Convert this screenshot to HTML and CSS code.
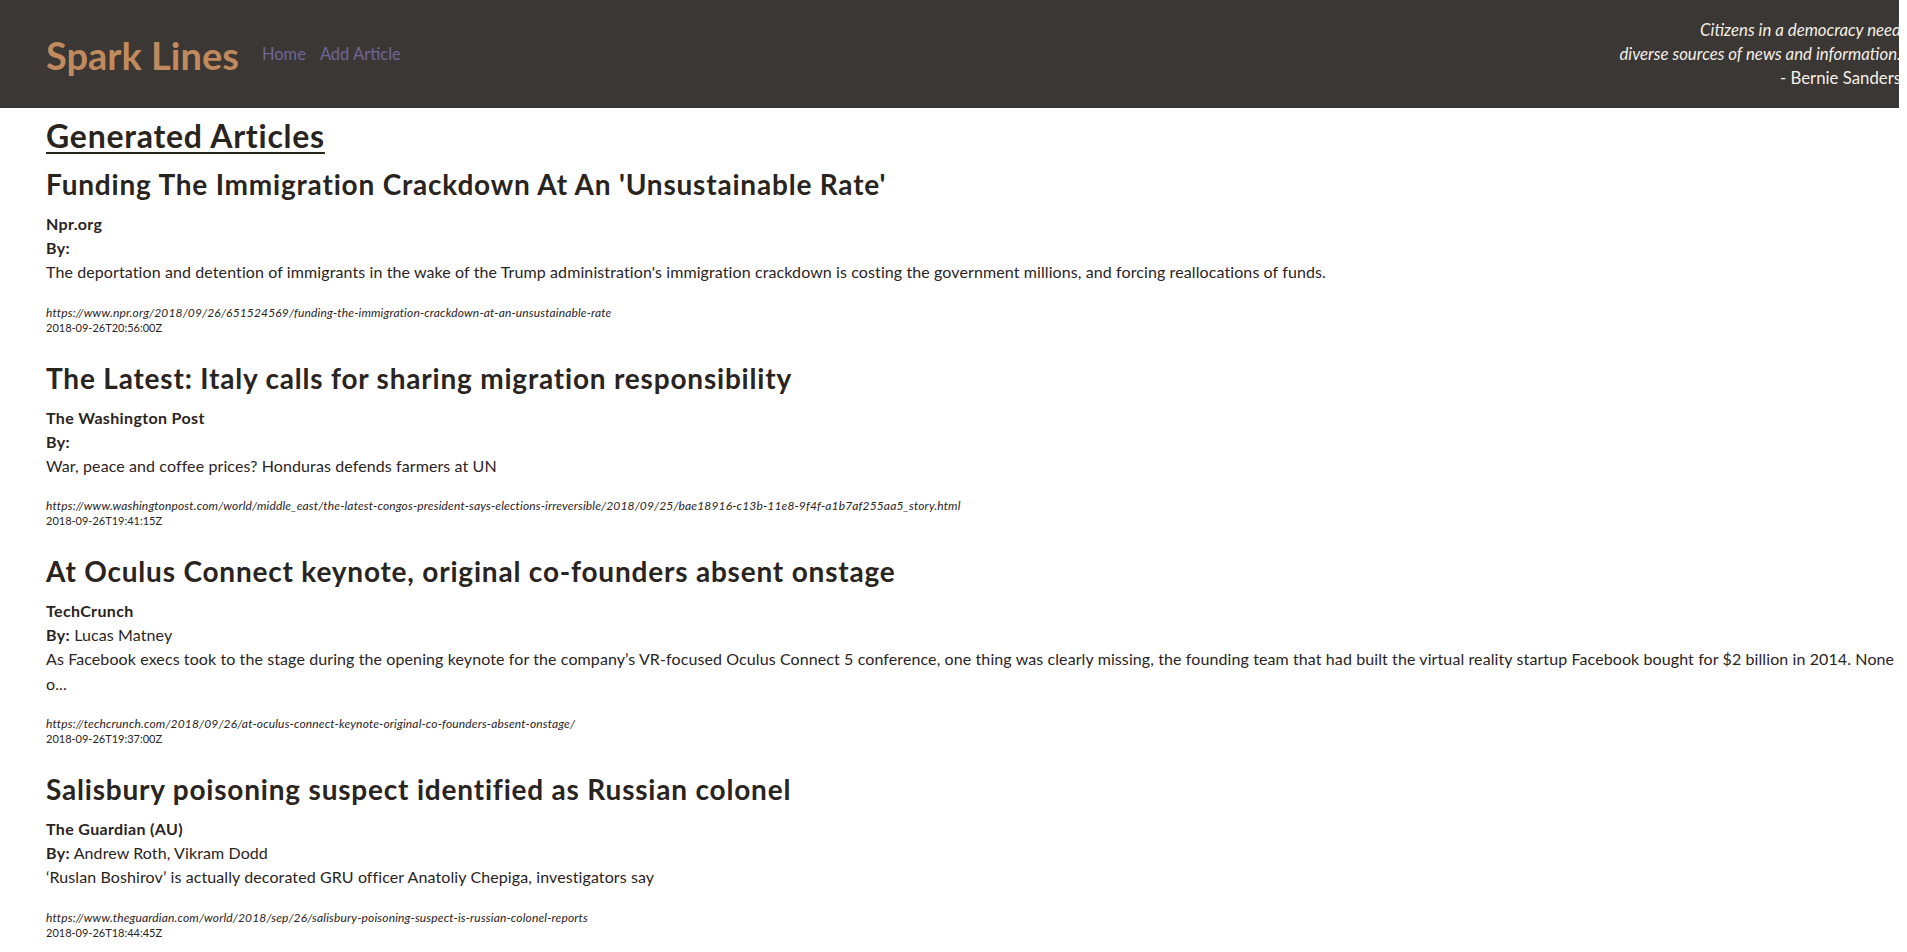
FILE: index.html
```html
<!DOCTYPE html>
<html lang="en">
<head>
<meta charset="utf-8">
<title>Spark Lines</title>
<link rel="stylesheet" href="styles.css">
</head>
<body>
<header class="topbar">
  <div class="brand-nav">
    <span class="brand">Spark Lines</span>
    <nav class="nav">
      <a href="#" class="nav-link">Home</a>
      <a href="#" class="nav-link">Add Article</a>
    </nav>
  </div>
  <div class="quote">
    <em>Citizens in a democracy need</em>
    <em>diverse sources of news and information.</em>
    <span>- Bernie Sanders</span>
  </div>
</header>
<main class="content">
  <h1 class="page-title">Generated Articles</h1>

  <article class="article">
    <h2 class="article-title">Funding The Immigration Crackdown At An 'Unsustainable Rate'</h2>
    <div class="source">Npr.org</div>
    <div class="author"><b>By:</b> </div>
    <p class="desc">The deportation and detention of immigrants in the wake of the Trump administration's immigration crackdown is costing the government millions, and forcing reallocations of funds.</p>
    <div class="url">https://www.npr.org/2018/09/26/651524569/funding-the-immigration-crackdown-at-an-unsustainable-rate</div>
    <div class="date">2018-09-26T20:56:00Z</div>
  </article>

  <article class="article">
    <h2 class="article-title">The Latest: Italy calls for sharing migration responsibility</h2>
    <div class="source">The Washington Post</div>
    <div class="author"><b>By:</b> </div>
    <p class="desc">War, peace and coffee prices? Honduras defends farmers at UN</p>
    <div class="url">https://www.washingtonpost.com/world/middle_east/the-latest-congos-president-says-elections-irreversible/2018/09/25/bae18916-c13b-11e8-9f4f-a1b7af255aa5_story.html</div>
    <div class="date">2018-09-26T19:41:15Z</div>
  </article>

  <article class="article">
    <h2 class="article-title">At Oculus Connect keynote, original co-founders absent onstage</h2>
    <div class="source">TechCrunch</div>
    <div class="author"><b>By:</b> Lucas Matney</div>
    <p class="desc">As Facebook execs took to the stage during the opening keynote for the company’s VR-focused Oculus Connect 5 conference, one thing was clearly missing, the founding team that had built the virtual reality startup Facebook bought for $2 billion in 2014. None o...</p>
    <div class="url">https://techcrunch.com/2018/09/26/at-oculus-connect-keynote-original-co-founders-absent-onstage/</div>
    <div class="date">2018-09-26T19:37:00Z</div>
  </article>

  <article class="article">
    <h2 class="article-title">Salisbury poisoning suspect identified as Russian colonel</h2>
    <div class="source">The Guardian (AU)</div>
    <div class="author"><b>By:</b> Andrew Roth, Vikram Dodd</div>
    <p class="desc">‘Ruslan Boshirov’ is actually decorated GRU officer Anatoliy Chepiga, investigators say</p>
    <div class="url">https://www.theguardian.com/world/2018/sep/26/salisbury-poisoning-suspect-is-russian-colonel-reports</div>
    <div class="date">2018-09-26T18:44:45Z</div>
  </article>
</main>
</body>
</html>
```
FILE: styles.css
```css
html, body {
  margin: 0;
  padding: 0;
  background: #ffffff;
}
body {
  font-family: "Segoe UI", Lato, "Open Sans", sans-serif;
  color: #2a241f;
  font-size: 16px;
}
.topbar {
  width: calc(100% - 8px);
  height: 108px;
  box-sizing: border-box;
  background: #3b3734;
  display: flex;
  justify-content: space-between;
  align-items: center;
  padding-left: 46px;
  overflow: hidden;
}
.brand-nav {
  display: flex;
  align-items: center;
  gap: 23px;
}
.brand {
  font-size: 38px;
  font-weight: 700;
  color: #c08a5e;
  line-height: 1;
  margin-top: 2px;
}
.nav {
  display: flex;
  gap: 14px;
}
.nav-link {
  color: #6f6694;
  text-decoration: none;
  font-size: 16.5px;
}
.quote {
  display: flex;
  flex-direction: column;
  align-items: flex-end;
  color: #f3efe6;
  font-size: 16.8px;
  line-height: 24px;
  margin-right: -2px;
}
.quote em { font-style: italic; }
.content {
  padding: 0 8px 0 46px;
}
.page-title {
  font-size: 32px;
  letter-spacing: 0.75px;
  font-weight: 700;
  text-decoration: underline;
  text-underline-offset: 4px;
  text-decoration-thickness: 2px;
  line-height: 36px;
  margin: 10px 0 14px;
}
.article {
  margin-bottom: 27px;
}
.article-title {
  font-size: 28px;
  letter-spacing: 0.8px;
  font-weight: 700;
  line-height: 32px;
  margin: 0 0 12px;
}
.source {
  font-weight: 700;
  line-height: 24px;
  font-size: 16px;
  letter-spacing: 0.35px;
}
.author {
  line-height: 24px;
  font-size: 16px;
  letter-spacing: 0.1px;
}
.author b { letter-spacing: 0.35px; }
.desc {
  margin: 0 0 20px;
  line-height: 24.5px;
  font-size: 16px;
  letter-spacing: 0.1px;
}
.url {
  font-size: 12px;
  letter-spacing: 0.15px;
  font-style: italic;
  line-height: 15px;
}
.date {
  font-size: 11px;
  line-height: 15px;
}
```
